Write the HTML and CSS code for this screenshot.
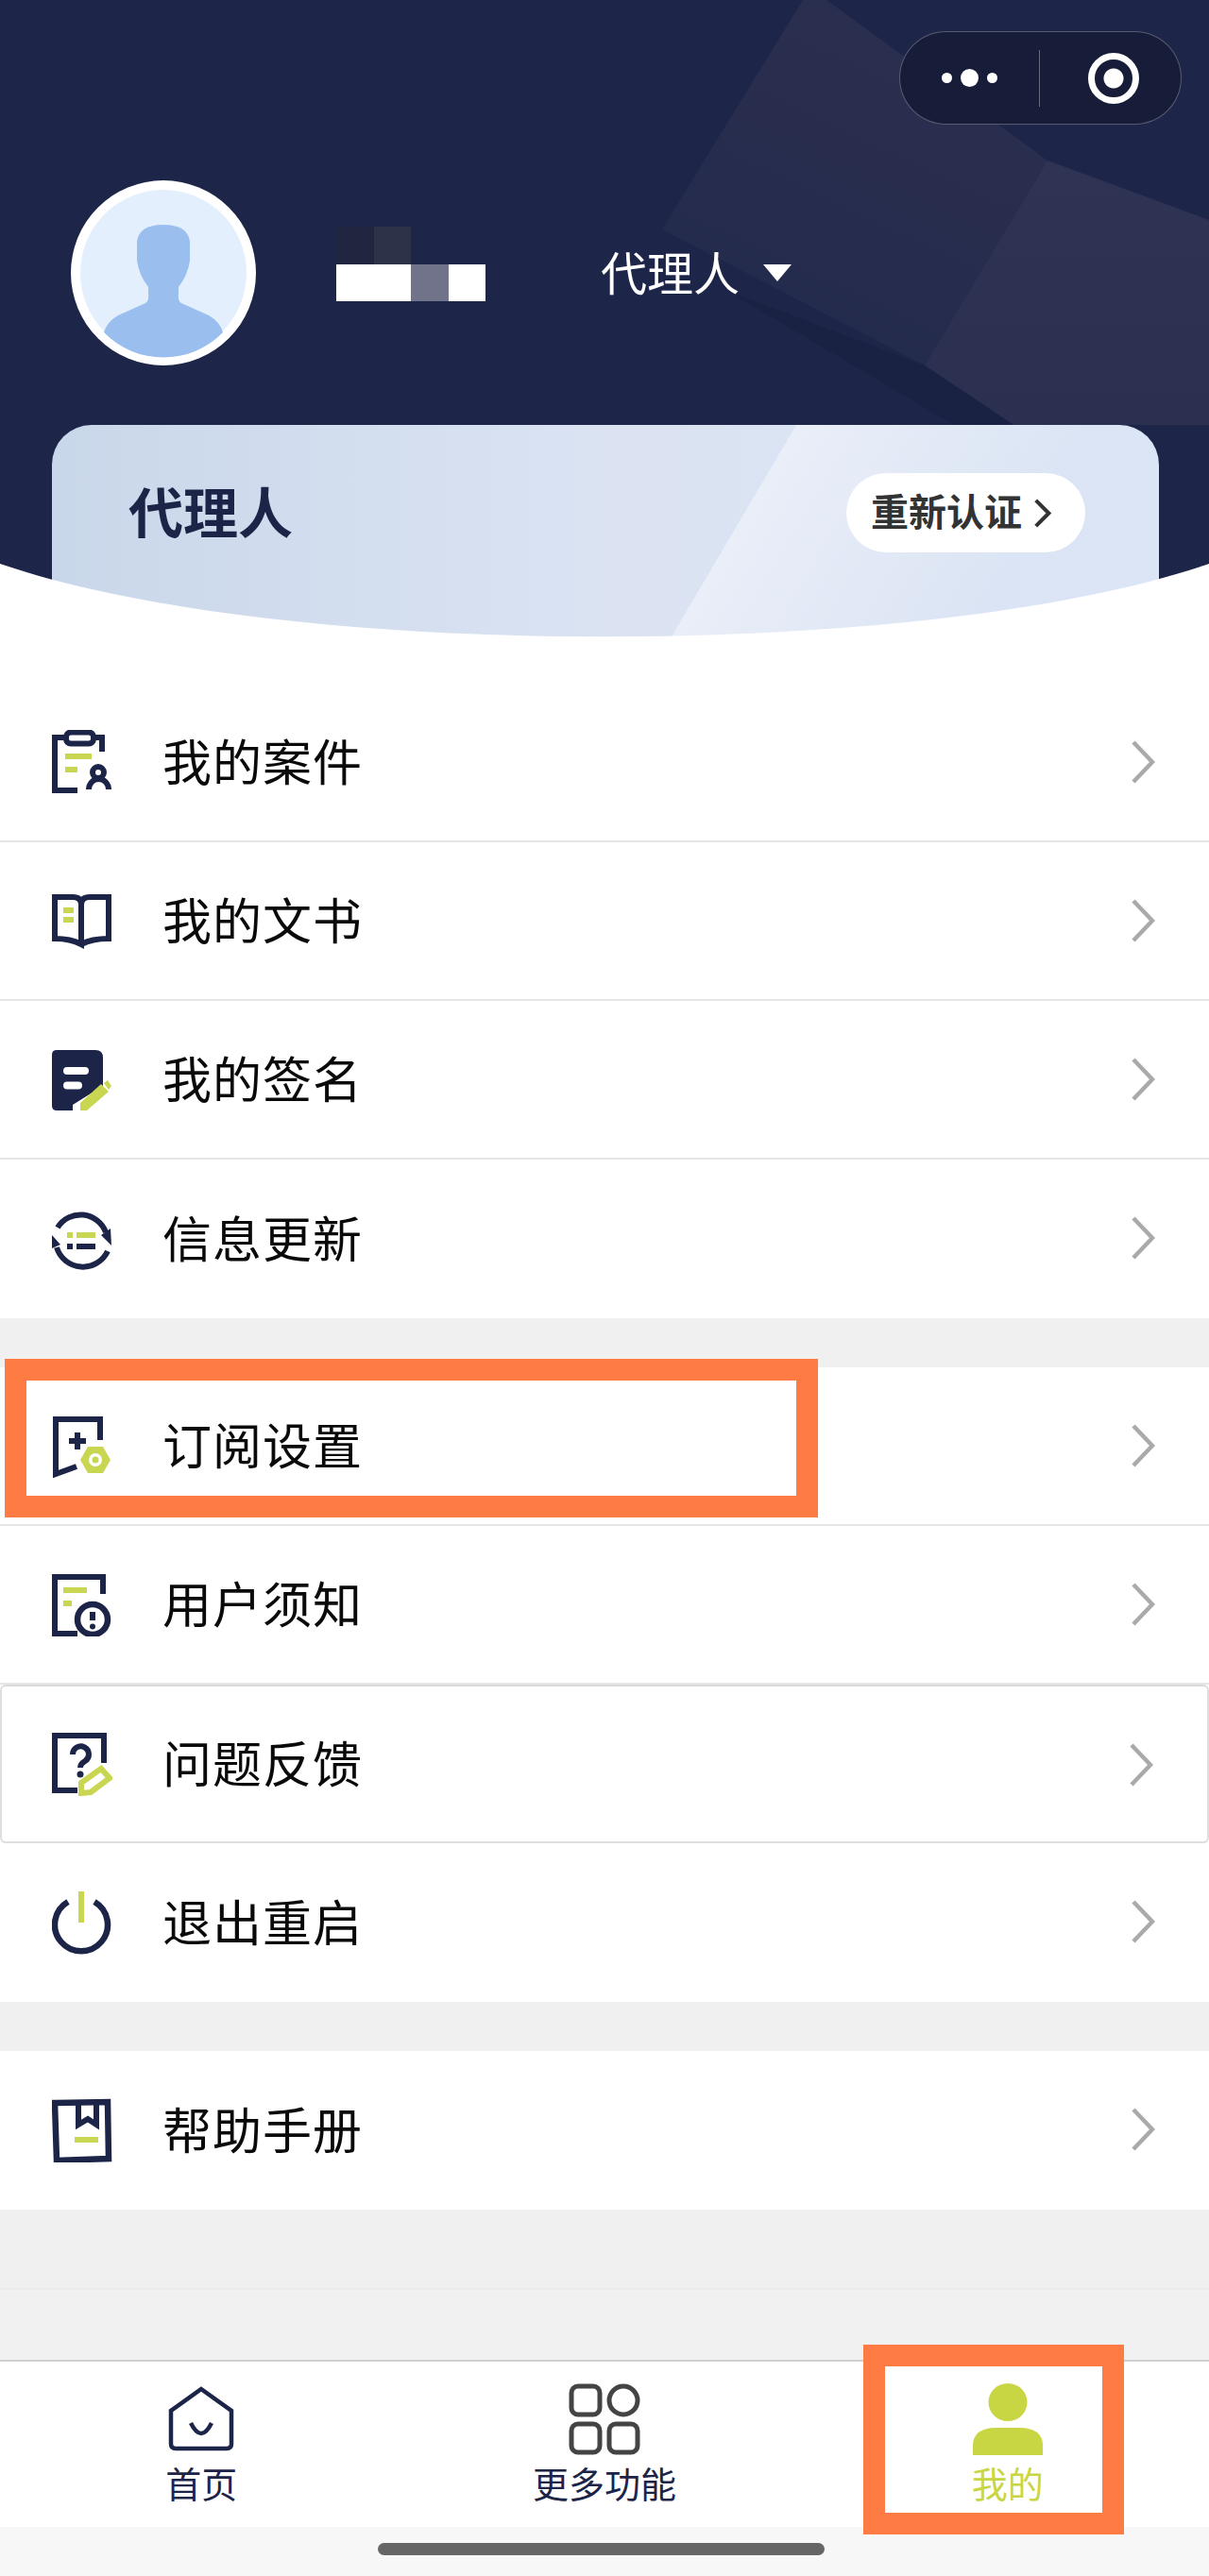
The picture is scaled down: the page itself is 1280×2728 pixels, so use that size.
FILE: index.html
```html
<!DOCTYPE html>
<html lang="zh-CN">
<head>
    <meta charset="UTF-8">
    <meta name="viewport" content="width=device-width, initial-scale=1.0">
    <title>我的</title>
    <link rel="stylesheet" href="styles.css">
</head>
<body>
    <header class="hero">
        <svg class="hero-shapes" viewBox="0 0 1280 676">
            <defs>
                <linearGradient id="shapeA" x1="0.7" y1="0" x2="0.2" y2="1">
                    <stop offset="0" stop-color="#2b2f4f"/>
                    <stop offset="0.45" stop-color="#282d4e"/>
                    <stop offset="1" stop-color="#212a4c"/>
                </linearGradient>
                <linearGradient id="shapeB" x1="0.5" y1="0" x2="0.5" y2="1">
                    <stop offset="0" stop-color="#2f3354"/>
                    <stop offset="1" stop-color="#2b3050"/>
                </linearGradient>
            </defs>
            <polygon points="850,0 875,0 1109,170 979,387 701,243" fill="url(#shapeA)"/>
            <polygon points="1109,170 1280,233 1280,450 1073,450 979,387" fill="url(#shapeB)"/>
            <polygon points="770,308 979,387 1073,450 1010,450" fill="#1a2244"/>
        </svg>

        <div class="capsule-bar">
            <div class="capsule">
                <div class="capsule-dots">
                    <span class="dot"></span>
                    <span class="dot dot-big"></span>
                    <span class="dot"></span>
                </div>
                <span class="capsule-line"></span>
                <div class="capsule-target">
                    <span class="target-ring"></span>
                </div>
            </div>
        </div>

        <div class="profile">
            <div class="avatar">
                <svg viewBox="0 0 196 196">
                    <circle cx="98" cy="98" r="88" fill="#e3effd"/>
                    <path d="M35 161 Q38 150 50 143 L79 130 Q83 128 82 120 V113 Q72 100 70 85 V65 Q72 47 98 47 Q124 47 126 65 V85 Q124 100 114 113 V120 Q113 128 117 130 L146 143 Q158 150 161 161 A88 88 0 0 1 35 161Z" fill="#9abfef"/>
                </svg>
            </div>
            <div class="mosaic">
                <span class="m-dim"></span><span class="m-soft"></span><span></span><span></span>
                <span class="m-white"></span><span class="m-white"></span><span class="m-grey"></span><span class="m-white"></span>
            </div>
            <div class="role">代理人<span class="role-arrow"></span></div>
        </div>

        <div class="cert-card">
            <span class="cert-title">代理人</span>
            <span class="cert-btn">重新认证
                <svg class="cert-chevron" viewBox="0 0 22 36"><polyline points="3,3 18,18 3,33"/></svg>
            </span>
        </div>

        <svg class="hero-curve" viewBox="0 0 1280 676"><path d="M0 597 C300 700 980 700 1280 597 V676 H0Z"/></svg>
    </header>

    <section class="menu menu-first">
        <div class="row">
            <svg class="icon" viewBox="0 0 64 68">
                <path class="navy" d="M14 8 H3 V64 H27 M44 8 H53 V23"/>
                <rect class="navy" x="15" y="2.500" width="29" height="12" rx="5"/>
                <path class="lime" d="M14 28 H42 M14 42 H27"/>
                <circle class="navy" cx="49" cy="45" r="6"/>
                <path class="navy" d="M39 63 a10.500 11 0 0 1 21 0"/>
            </svg>
            <span class="row-text">我的案件</span>
            <svg class="chevron" viewBox="0 0 26 48"><polyline points="3,3 23,24 3,45"/></svg>
        </div>
        <div class="row">
            <svg class="icon" viewBox="0 0 64 68">
                <path class="navy" d="M3 9 H22 Q31 9 31 17 V59 Q20 53 3 53Z M31 17 Q31 9 40 9 H60 V53 Q42 53 31 59"/>
                <path class="lime" d="M12 23 H23 M12 33 H23"/>
            </svg>
            <span class="row-text">我的文书</span>
            <svg class="chevron" viewBox="0 0 26 48"><polyline points="3,3 23,24 3,45"/></svg>
        </div>
        <div class="row">
            <svg class="icon" viewBox="0 0 64 68">
                <path d="M5 3 H46 Q54 3 54 11 V41 L22 61 V67 H5 Q0 67 0 62 V8 Q0 3 5 3Z" fill="#1c2548"/>
                <path class="white-bar" d="M16 25 H35 M16 40.500 H28"/>
                <polygon points="30,67 30,59 52,39 60,47 37,67" fill="#c8d652"/>
                <polygon points="55,38 59,35 63,41 60,45" fill="#c8d652"/>
            </svg>
            <span class="row-text">我的签名</span>
            <svg class="chevron" viewBox="0 0 26 48"><polyline points="3,3 23,24 3,45"/></svg>
        </div>
        <div class="row row-last">
            <svg class="icon" viewBox="0 0 64 68">
                <path class="navy" d="M6 22 A28.500 28.500 0 0 1 57 27 M59 47 A29 29 0 0 1 5 43"/>
                <polygon points="52,30 62,23 63,41" fill="#1c2548"/>
                <polygon points="0,30 9,40 0,44" fill="#1c2548"/>
                <path class="lime" d="M16 30 H22 M26 30 H46"/>
                <path class="navy" d="M16 42 H22 M26 42 H46"/>
            </svg>
            <span class="row-text">信息更新</span>
            <svg class="chevron" viewBox="0 0 26 48"><polyline points="3,3 23,24 3,45"/></svg>
        </div>
    </section>

    <section class="menu">
        <div class="row">
            <svg class="icon" viewBox="0 0 64 68">
                <path class="navy" d="M51 28 V6 H4 V64 L26 56"/>
                <path class="navy" d="M27 20 V38 M18 29 H36"/>
                <polygon points="38,35 54,35 62,49 54,63 38,63 30,49" fill="#c8d652"/>
                <circle cx="46" cy="49" r="7" fill="#fff"/>
                <circle cx="46" cy="49" r="3.500" fill="#c8d652"/>
            </svg>
            <span class="row-text">订阅设置</span>
            <svg class="chevron" viewBox="0 0 26 48"><polyline points="3,3 23,24 3,45"/></svg>
            <span class="mark mark-row"></span>
        </div>
        <div class="row">
            <svg class="icon" viewBox="0 0 64 68">
                <path class="navy" d="M27 65 H3 V5 H54 V23"/>
                <path class="lime" d="M12 19 H37 M12 33 H21"/>
                <circle class="navy ring" cx="43" cy="50" r="16"/>
                <path class="navy" d="M43 42 V51"/>
                <circle cx="43" cy="57.500" r="3" fill="#1c2548"/>
            </svg>
            <span class="row-text">用户须知</span>
            <svg class="chevron" viewBox="0 0 26 48"><polyline points="3,3 23,24 3,45"/></svg>
        </div>
        <div class="row row-boxed">
            <svg class="icon" viewBox="0 0 64 68">
                <path class="navy" d="M27 62 H3 V4 H55 V33"/>
                <path class="navy" d="M22 24 a8.500 8.500 0 1 1 13 7 q-5 3 -5 7"/>
                <circle cx="30" cy="45" r="3.500" fill="#1c2548"/>
                <path class="lime" d="M31 54 L52 39 L61 49 L41 64 L31 65Z"/>
            </svg>
            <span class="row-text">问题反馈</span>
            <svg class="chevron" viewBox="0 0 26 48"><polyline points="3,3 23,24 3,45"/></svg>
        </div>
        <div class="row row-last">
            <svg class="icon" viewBox="0 0 64 68">
                <path class="navy ring" d="M17 12 A28 28 0 1 0 45 12"/>
                <path class="lime" d="M31 1 V34"/>
            </svg>
            <span class="row-text">退出重启</span>
            <svg class="chevron" viewBox="0 0 26 48"><polyline points="3,3 23,24 3,45"/></svg>
        </div>
    </section>

    <section class="menu">
        <div class="row row-last">
            <svg class="icon" viewBox="0 0 64 68">
                <path class="navy ring" d="M3 5 L59 4 L60 64 L5 66Z"/>
                <path class="navy" d="M28 4 V28 L38 22 L47 28 V4"/>
                <path class="lime" d="M24 44 H49"/>
            </svg>
            <span class="row-text">帮助手册</span>
            <svg class="chevron" viewBox="0 0 26 48"><polyline points="3,3 23,24 3,45"/></svg>
        </div>
    </section>

    <div class="filler"></div>

    <nav class="tabbar">
        <div class="tab">
            <svg class="tab-icon" viewBox="0 0 76 76">
                <path class="tab-home" d="M38 6 L70 29 V64 Q70 69 65 69 H11 Q6 69 6 64 V29Z"/>
                <path class="tab-home" d="M27 42 Q38 64 49 42"/>
            </svg>
            <span class="tab-label">首页</span>
        </div>
        <div class="tab">
            <svg class="tab-icon" viewBox="0 0 76 76">
                <rect class="tab-more" x="3" y="3" width="30" height="30" rx="7"/>
                <circle class="tab-more" cx="58" cy="18" r="15"/>
                <rect class="tab-more" x="3" y="43" width="30" height="30" rx="7"/>
                <rect class="tab-more" x="43" y="43" width="30" height="30" rx="7"/>
            </svg>
            <span class="tab-label">更多功能</span>
        </div>
        <div class="tab tab-active">
            <svg class="tab-icon" viewBox="0 0 76 76">
                <ellipse cx="38" cy="20" rx="20.500" ry="20" fill="#c9d644"/>
                <path d="M1 76 V66 Q1 47 26 47 H50 Q75 47 75 66 V76Z" fill="#c9d644"/>
            </svg>
            <span class="tab-label">我的</span>
            <span class="mark mark-tab"></span>
        </div>
    </nav>

    <div class="home-area">
        <span class="home-bar"></span>
    </div>
</body>
</html>
```

FILE: styles.css
```css
* {
    margin: 0;
    padding: 0;
    box-sizing: border-box;
}

body {
    width: 1280px;
    height: 2728px;
    overflow: hidden;
    background: #f0f0f0;
    font-family: "Noto Sans CJK SC", "Noto Sans", sans-serif;
}

/* header */
.hero {
    position: relative;
    height: 676px;
    padding-top: 33px;
    overflow: hidden;
    background: #1d2549;
}

.hero-shapes,
.hero-curve {
    position: absolute;
    left: 0;
    top: 0;
    width: 1280px;
    height: 676px;
}

.hero-curve {
    fill: #fff;
}

.capsule-bar {
    position: relative;
    display: flex;
    justify-content: flex-end;
    padding-right: 29px;
}

.capsule {
    display: flex;
    align-items: center;
    width: 299px;
    height: 99px;
    border: 1.500px solid rgba(255, 255, 255, 0.28);
    border-radius: 50px;
    background: #171d38;
}

.capsule-dots {
    display: flex;
    align-items: center;
    justify-content: center;
    gap: 9px;
    width: 147px;
}

.dot {
    width: 11px;
    height: 11px;
    border-radius: 50%;
    background: #fff;
}

.dot-big {
    width: 19px;
    height: 19px;
}

.capsule-line {
    width: 1px;
    height: 60px;
    background: rgba(255, 255, 255, 0.35);
}

.capsule-target {
    display: flex;
    align-items: center;
    justify-content: center;
    flex: 1;
    padding-left: 6px;
}

.target-ring {
    width: 54px;
    height: 54px;
    border: 7px solid #fff;
    border-radius: 50%;
    background: radial-gradient(circle, #fff 0, #fff 10px, transparent 11px);
}

.profile {
    position: relative;
    display: flex;
    align-items: center;
    height: 196px;
    margin-top: 59px;
    padding-left: 75px;
}

.avatar {
    width: 196px;
    height: 196px;
    border-radius: 50%;
    background: #fff;
}

.avatar svg {
    display: block;
    width: 196px;
    height: 196px;
}

.mosaic {
    display: grid;
    grid-template-columns: repeat(4, 39.5px);
    grid-template-rows: repeat(2, 39.5px);
    align-self: flex-start;
    margin: 49px 0 0 85px;
}

.m-dim { background: #20263f; }
.m-soft { background: #2e3248; }
.m-white { background: #fff; }
.m-grey { background: #71738a; }

.role {
    display: flex;
    align-items: center;
    margin: -5px 0 0 122px;
    color: #fff;
    font-size: 49px;
    line-height: 60px;
}

.role-arrow {
    width: 0;
    height: 0;
    margin: 5px 0 0 25px;
    border-left: 15px solid transparent;
    border-right: 15px solid transparent;
    border-top: 18px solid #fff;
}

.cert-card {
    position: relative;
    display: flex;
    align-items: flex-start;
    justify-content: space-between;
    height: 240px;
    margin: 63px 53px 0 55px;
    padding: 48px 78px 0 81px;
    border-radius: 42px 42px 0 0;
    background:
        linear-gradient(120.5deg, transparent 60%, rgba(255, 255, 255, 0.4) 60%, rgba(255, 255, 255, 0) 84%),
        linear-gradient(90deg, #c9d7ea 0%, #dbe3f3 50%, #dbe5f5 100%);
}

.cert-title {
    color: #1c2548;
    font-size: 58px;
    font-weight: 700;
    line-height: 84px;
}

.cert-btn {
    display: flex;
    align-items: center;
    gap: 12px;
    height: 84px;
    margin-top: 3px;
    padding: 0 35px 6px 26px;
    border-radius: 42px;
    background: #fff;
    color: #333;
    font-size: 40px;
    font-weight: 700;
    line-height: 78px;
}

.cert-chevron {
    width: 20px;
    height: 33px;
    margin-top: 6px;
    fill: none;
    stroke: #333;
    stroke-width: 4.500;
}

/* list */
.menu {
    margin-top: 52px;
    background: #fff;
}

.menu-first {
    margin-top: 0;
    padding-top: 48px;
}

.row {
    position: relative;
    display: flex;
    align-items: center;
    height: 168px;
    padding-left: 55px;
    border-bottom: 2px solid #e6e6e6;
}

.row-last {
    border-bottom: none;
}

.row-boxed {
    border: 2px solid #dedede;
    border-top-color: #d9d9d9;
    border-radius: 6px;
    padding-left: 53px;
}

.icon {
    flex-shrink: 0;
    width: 64px;
    height: 68px;
    fill: none;
}

.navy {
    fill: none;
    stroke: #1c2548;
    stroke-width: 6;
}

.lime {
    fill: none;
    stroke: #c8d652;
    stroke-width: 6;
}

.ring {
    stroke-width: 6.500;
}

.white-bar {
    fill: none;
    stroke: #fff;
    stroke-linecap: round;
    stroke-width: 8;
}

.row-text {
    margin: -4px 0 0 53px;
    color: #0a0a0a;
    font-size: 52px;
    letter-spacing: 1px;
    line-height: 70px;
}

.chevron {
    position: absolute;
    right: 57px;
    top: 59px;
    width: 26px;
    height: 48px;
    fill: none;
    stroke: #aaa;
    stroke-width: 4.500;
}

/* hand-drawn highlight boxes */
.mark {
    position: absolute;
    border: 23px solid #fe7b43;
}

.mark-row {
    left: 5px;
    top: -9px;
    width: 861px;
    height: 168px;
}

.mark-tab {
    left: 61px;
    top: -18px;
    width: 276px;
    height: 201px;
}

.filler {
    height: 159px;
    background: linear-gradient(#f0f0f0 83px, #ebebeb 83px, #ebebeb 85px, #f1f1f1 85px);
}

/* bottom tabs */
.tabbar {
    display: grid;
    grid-template-columns: repeat(3, 1fr);
    height: 177px;
    border-top: 2px solid #cfcfcf;
    background: #fff;
}

.tab {
    position: relative;
    display: flex;
    flex-direction: column;
    align-items: center;
    padding-top: 23px;
}

.tab-icon {
    width: 76px;
    height: 76px;
    fill: none;
}

.tab-home {
    stroke: #1c2548;
    stroke-width: 4.500;
}

.tab-more {
    stroke: #444;
    stroke-width: 5;
}

.tab-label {
    margin-top: 5px;
    color: #1c2548;
    font-size: 38px;
    line-height: 48px;
}

.tab-active .tab-label {
    color: #c9d644;
}

.home-area {
    display: flex;
    justify-content: center;
    height: 52px;
    padding-top: 17px;
    background: #f7f7f7;
}

.home-bar {
    width: 473px;
    height: 13px;
    margin-left: -7px;
    border-radius: 7px;
    background: #666;
}
```
